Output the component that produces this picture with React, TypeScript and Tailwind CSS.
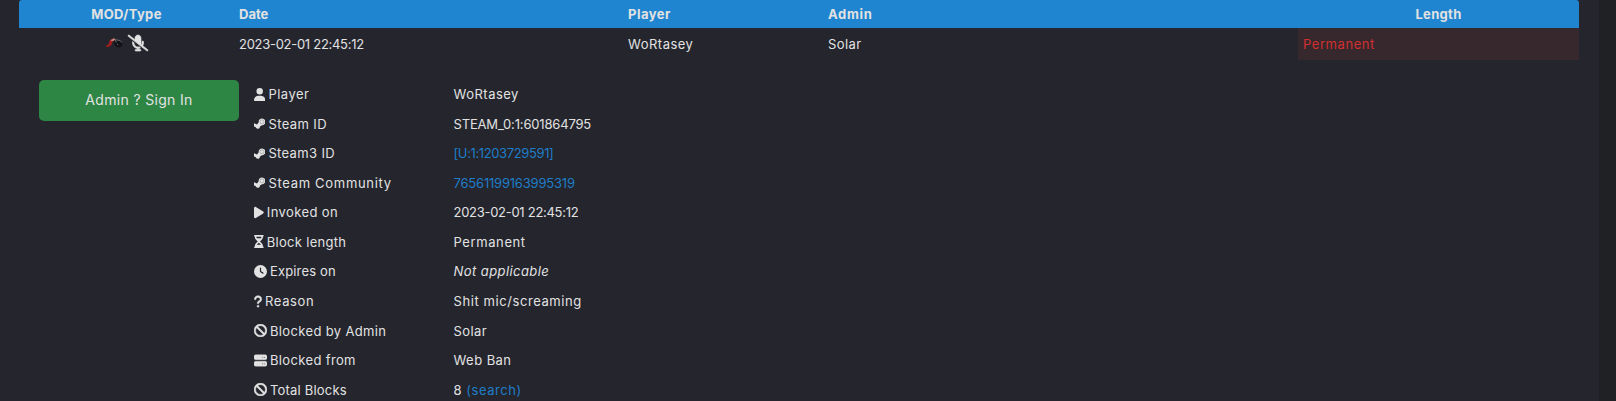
import type { ReactNode } from "react";
import {
  FaBan,
  FaClock,
  FaHourglassHalf,
  FaMicrophoneSlash,
  FaPlay,
  FaQuestion,
  FaServer,
  FaUser,
} from "react-icons/fa6";

type Detail = {
  icon: ReactNode;
  label: string;
  labelClass: string;
  value: ReactNode;
  valueClass: string;
};

function SteamIcon() {
  return (
    <svg viewBox="0 0 11.4 13" className="h-[13px] w-[11.4px]" aria-hidden="true">
      <path
        d="M0 6.2 3 7.4 4.6 5.4C4.4 3.2 5.8 1.4 8 1.4c2 0 3.4 1.5 3.4 3.4S9.9 8.2 7.9 8.2L6 9.5c0 1.4-1 2.3-2.2 2.3-1.1 0-1.900-.7-2.200-1.700L0 9.400Z"
        fill="currentColor"
      />
      <circle cx="8" cy="4.8" r="2" fill="none" stroke="#24252d" strokeWidth=".25" />
    </svg>
  );
}

function ModIcon() {
  return (
    <svg viewBox="0 0 18 12" className="h-3 w-[18px]" fill="none" aria-hidden="true">
      <path d="M.5 9.2 3.5 7.3 5 3 9 1.2l1.5 1.2-3 2-1.3 3.8L3 10.3Z" fill="#a51d1d" />
      <path d="M5.3 3.2 9 1.2l1.8 1.2-3.5 1.8Z" fill="#c98783" />
      <path d="m9 5 2.7-2.2 4 .7 2 3-1.3 3.2-3.6.8-3.3-2.3Z" fill="#111216" />
      <path d="m10 2.2 1.3 3.3M11 2.8l4.3.8 1.5 2M11.9 6.8l1.4 1.3" stroke="#66676c" />
    </svg>
  );
}

const details: Detail[] = [
  {
    icon: <FaUser className="h-[13px] w-[11.4px]" />,
    label: "Player",
    labelClass: "tracking-[0.5px]",
    value: "WoRtasey",
    valueClass: "tracking-[0.5px]",
  },
  {
    icon: <SteamIcon />,
    label: "Steam ID",
    labelClass: "tracking-[0.4px]",
    value: "STEAM_0:1:601864795",
    valueClass: "tracking-[-0.17px]",
  },
  {
    icon: <SteamIcon />,
    label: "Steam3 ID",
    labelClass: "tracking-[0.35px]",
    value: "[U:1:1203729591]",
    valueClass: "tracking-[-0.38px] text-[#1f7dc8]",
  },
  {
    icon: <SteamIcon />,
    label: "Steam Community",
    labelClass: "tracking-[0.7px]",
    value: "76561199163995319",
    valueClass: "tracking-[-0.2px] text-[#1f7dc8]",
  },
  {
    icon: <FaPlay className="h-[13px] w-[9.75px]" />,
    label: "Invoked on",
    labelClass: "tracking-[0.4px]",
    value: "2023-02-01 22:45:12",
    valueClass: "tracking-[-0.28px]",
  },
  {
    icon: <FaHourglassHalf className="h-[13px] w-[9.75px]" />,
    label: "Block length",
    labelClass: "tracking-[0.3px]",
    value: "Permanent",
    valueClass: "tracking-[0.6px]",
  },
  {
    icon: <FaClock className="size-[13px]" />,
    label: "Expires on",
    labelClass: "tracking-[0.15px]",
    value: <em>Not applicable</em>,
    valueClass: "tracking-[0.43px]",
  },
  {
    icon: <FaQuestion strokeWidth={20} className="h-[13px] w-[8.1px]" />,
    label: "Reason",
    labelClass: "tracking-[0.6px]",
    value: "Shit mic/screaming",
    valueClass: "tracking-[0.58px]",
  },
  {
    icon: <FaBan strokeWidth={20} className="size-[13px]" />,
    label: "Blocked by Admin",
    labelClass: "tracking-[0.35px]",
    value: "Solar",
    valueClass: "tracking-[0.4px]",
  },
  {
    icon: <FaServer strokeWidth={16} className="size-[13px]" />,
    label: "Blocked from",
    labelClass: "tracking-[0.35px]",
    value: "Web Ban",
    valueClass: "tracking-[0.45px]",
  },
  {
    icon: <FaBan strokeWidth={20} className="size-[13px]" />,
    label: "Total Blocks",
    labelClass: "tracking-[0.2px]",
    value: (
      <>
        8 <a className="text-[#1f7dc8]">(search)</a>
      </>
    ),
    valueClass: "tracking-[0.55px]",
  },
];

export default function App() {
  return (
    <div className="flex h-[401px] overflow-hidden bg-[#202124] font-['Inter','Open_Sans',sans-serif] text-[13px] leading-5 whitespace-nowrap text-[#e2e2e2]">
      <main className="w-[1599px] bg-[#24252d] pl-[19px]">
        <div className="w-[1560px]">
          <div className="flex h-7 items-center rounded-t-[3px] bg-[#1f85d1] pb-px font-bold">
            <div className="w-[215px] text-center tracking-[0.35px]">MOD/Type</div>
            <div className="w-[389px] pl-[5px]">Date</div>
            <div className="w-[200px] pl-[5px] tracking-[0.5px]">Player</div>
            <div className="w-[475px] pl-[5px] tracking-[0.7px]">Admin</div>
            <div className="w-[281px] text-center tracking-[0.3px]">Length</div>
          </div>

          <div className="flex h-8 items-center">
            <div className="flex w-[215px] items-center justify-center gap-[5px] pb-0.5">
              <ModIcon />
              <FaMicrophoneSlash strokeWidth={20} className="h-4 w-5 overflow-visible" />
            </div>
            <div className="w-[389px] pb-px pl-[5px] tracking-[-0.28px]">2023-02-01 22:45:12</div>
            <div className="w-[200px] pb-px pl-[5px] tracking-[0.5px]">WoRtasey</div>
            <div className="w-[475px] pb-px pl-[5px] tracking-[0.4px]">Solar</div>
            <div className="flex h-8 w-[281px] items-center bg-[#37282e] pb-px pl-[5px] tracking-[0.57px] text-[#d32f2f]">
              Permanent
            </div>
          </div>

          <div className="flex pt-5 pl-5">
            <button className="h-[41px] w-[200px] shrink-0 rounded-[5px] bg-[#2d8644] pb-0.5 text-sm tracking-[0.33px]">
              Admin ? Sign In
            </button>
            <ul className="-mt-[0.6px] ml-[15px]">
              {details.map(({ icon, label, labelClass, value, valueClass }) => (
                <li key={label} className="flex h-[29.55px] items-center">
                  <div className="flex w-[199.5px] items-center gap-[3px]">
                    {icon}
                    <span className={labelClass}>{label}</span>
                  </div>
                  <span className={valueClass}>{value}</span>
                </li>
              ))}
            </ul>
          </div>
        </div>
      </main>
    </div>
  );
}
